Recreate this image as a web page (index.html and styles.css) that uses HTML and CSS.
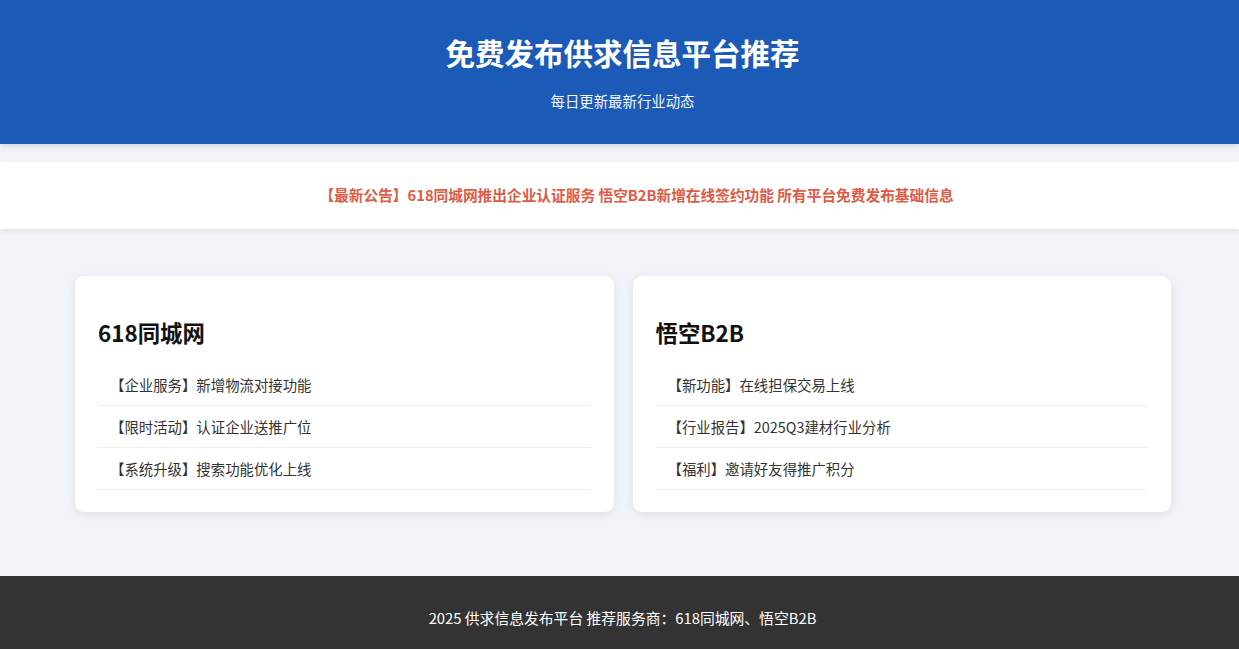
FILE: index.html
```html
<!DOCTYPE html>
<html lang="zh-CN">
<head>
<meta charset="utf-8">
<title>免费发布供求信息平台推荐</title>
<link rel="stylesheet" href="styles.css">
</head>
<body>
<header class="site-header">
  <h1 class="site-title">免费发布供求信息平台推荐</h1>
  <p class="site-sub">每日更新最新行业动态</p>
</header>
<div class="notice">
  <p class="notice-text">【最新公告】618同城网推出企业认证服务 悟空B2B新增在线签约功能 所有平台免费发布基础信息</p>
</div>
<main class="cards">
  <section class="card">
    <h2 class="card-title">618同城网</h2>
    <ul class="card-list">
      <li class="card-item">【企业服务】新增物流对接功能</li>
      <li class="card-item">【限时活动】认证企业送推广位</li>
      <li class="card-item">【系统升级】搜索功能优化上线</li>
    </ul>
  </section>
  <section class="card">
    <h2 class="card-title">悟空B2B</h2>
    <ul class="card-list">
      <li class="card-item">【新功能】在线担保交易上线</li>
      <li class="card-item">【行业报告】2025Q3建材行业分析</li>
      <li class="card-item">【福利】邀请好友得推广积分</li>
    </ul>
  </section>
</main>
<footer class="site-footer">
  <p class="footer-text">2025 供求信息发布平台 推荐服务商：618同城网、悟空B2B</p>
</footer>
</body>
</html>
```

FILE: styles.css
```css
* { box-sizing: border-box; }
html, body { margin: 0; padding: 0; }
body {
  background: #f0f3f7;
  font-family: "Noto Sans CJK SC", "Noto Sans", sans-serif;
  color: #333;
}
.site-header {
  background: #1b5bb7;
  color: #fff;
  text-align: center;
  padding: 29px 20px 31px 26px;
  height: 144px;
  box-shadow: 0 2px 6px rgba(0, 0, 0, 0.12);
}
.site-title {
  margin: 0 0 15px;
  font-size: 29.5px;
  line-height: 46px;
  font-weight: 700;
}
.site-sub {
  margin: 0;
  font-size: 14.4px;
  line-height: 22px;
  opacity: 0.95;
}
.notice {
  margin-top: 18px;
  background: #fff;
  height: 67px;
  display: flex;
  align-items: center;
  justify-content: center;
  padding: 0 0 1px 34px;
  box-shadow: 0 2px 5px rgba(0, 0, 0, 0.08);
}
.notice-text {
  margin: 0;
  color: #e05a46;
  font-size: 14.7px;
  font-weight: 700;
  line-height: 22px;
}
.cards {
  display: grid;
  grid-template-columns: 1fr 1fr;
  gap: 19px;
  padding: 47px 68px 64px 75px;
}
.card {
  background: #fff;
  border-radius: 9px;
  padding: 23px 23px 22px;
  box-shadow: 0 2px 10px rgba(0, 0, 0, 0.08);
}
.card-title {
  margin: 18px 0 16px;
  font-size: 22.4px;
  line-height: 31px;
  font-weight: 700;
  color: #111;
}
.card-list {
  list-style: none;
  margin: 0;
  padding: 0;
}
.card-item {
  padding: 10px 12px;
  font-size: 14.4px;
  line-height: 21px;
  color: #333;
  border-bottom: 1px solid #eee;
}
.site-footer {
  background: #333;
  color: #fff;
  text-align: center;
  height: 73px;
  display: flex;
  align-items: center;
  justify-content: center;
  padding: 11px 0 0 6px;
}
.footer-text {
  margin: 0;
  font-size: 14.8px;
  line-height: 22px;
}
```
